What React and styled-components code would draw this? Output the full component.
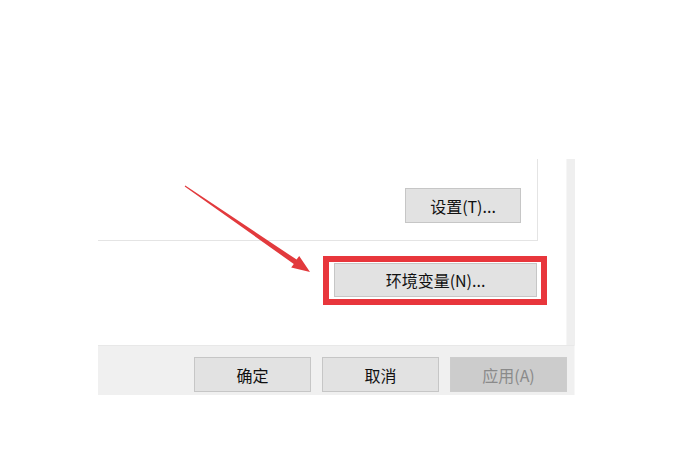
import React from 'react';
import styled, { createGlobalStyle } from 'styled-components';

const GlobalStyle = createGlobalStyle`
  html, body {
    margin: 0;
    padding: 0;
    background: #ffffff;
  }
  body {
    font-family: "Noto Sans CJK SC", "Noto Sans", "Liberation Sans", sans-serif;
  }
`;

const Stage = styled.div`
  position: relative;
  width: 683px;
  height: 457px;
  overflow: hidden;
  background: #ffffff;
  padding-top: 159px;
  box-sizing: border-box;
`;

const Dialog = styled.div`
  margin-left: 98px;
  width: 477px;
  display: flex;
  flex-direction: column;
`;

const Body = styled.div`
  width: 469px;
  border-right: 8px solid #efefef;
  box-shadow: inset -1px 0 0 #f6f6f6;
  background: #ffffff;
  display: flex;
  flex-direction: column;
  padding-bottom: 40px;
`;

const GroupBox = styled.div`
  width: 440px;
  height: 82px;
  box-sizing: border-box;
  border-right: 1px solid #e4e4e4;
  border-bottom: 1px solid #e4e4e4;
  display: flex;
  justify-content: flex-end;
  align-items: flex-start;
  padding: 29px 16px 0 0;
`;

const Button = styled.button`
  height: ${(p) => p.$h || 35}px;
  width: ${(p) => p.$w || 117}px;
  box-sizing: border-box;
  border: 1px solid ${(p) => (p.disabled ? '#cdcdcd' : '#c6c6c6')};
  background: ${(p) => (p.disabled ? '#cccccc' : '#e2e2e2')};
  color: ${(p) => (p.disabled ? '#8a8a8a' : '#111111')};
  font-family: "Noto Sans CJK SC", "Noto Sans", sans-serif;
  font-size: 16px;
  font-weight: 400;
  line-height: 1;
  padding: 0;
  margin: 0;
  display: flex;
  align-items: center;
  justify-content: center;
`;

const EnvRow = styled.div`
  display: flex;
  justify-content: flex-end;
  padding: 15px 20px 0 0;
`;

const Highlight = styled.div`
  width: 224px;
  height: 49px;
  box-sizing: border-box;
  border: 6px solid #e8363c;
  padding: 1px 4px 0 5px;
  display: flex;
  align-items: flex-start;
`;

const Footer = styled.div`
  height: 50px;
  box-sizing: border-box;
  background: #f0f0f0;
  border-top: 1px solid #e8e8e8;
  border-right: 1px solid #f7f7f7;
  display: flex;
  justify-content: flex-end;
  align-items: flex-start;
  gap: 11px;
  padding: 11px 7px 0 0;
`;

const Arrow = styled.svg`
  position: absolute;
  left: 0;
  top: 0;
  pointer-events: none;
`;

export default function App() {
  return (
    <Stage>
      <GlobalStyle />
      <Dialog>
        <Body>
          <GroupBox>
            <Button $w={116}>设置(T)...</Button>
          </GroupBox>
          <EnvRow>
            <Highlight>
              <Button $w={203} $h={34}>环境变量(N)...</Button>
            </Highlight>
          </EnvRow>
        </Body>
        <Footer>
          <Button>确定</Button>
          <Button>取消</Button>
          <Button disabled>应用(A)</Button>
        </Footer>
      </Dialog>
      <Arrow width="683" height="457" viewBox="0 0 683 457">
        <polygon
          points="185.3,185.6 296.6,259.6 299.2,256.0 310,272 291.2,267.6 293.8,264.0 184.7,186.4"
          fill="#e23a3d"
        />
      </Arrow>
    </Stage>
  );
}
